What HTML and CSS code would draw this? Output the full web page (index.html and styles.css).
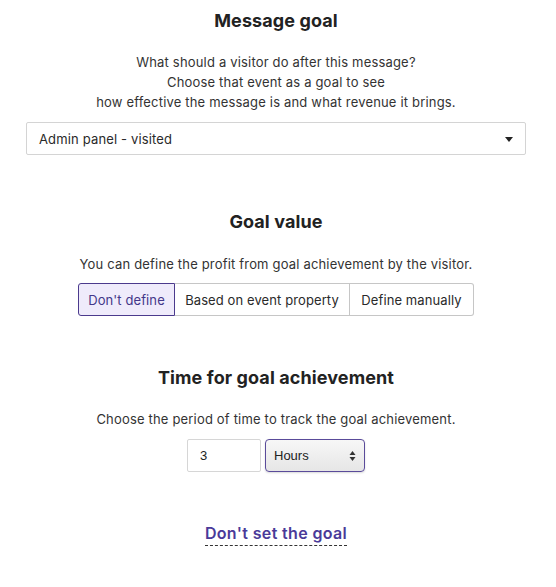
FILE: index.html
```html
<!DOCTYPE html>
<html>
<head>
<meta charset="utf-8">
<link rel="stylesheet" href="styles.css">
</head>
<body>
<div class="page">
  <section class="block block-first">
    <h2 class="title">Message goal</h2>
    <p class="desc">What should a visitor do after this message?<br>Choose that event as a goal to see<br>how effective the message is and what revenue it brings.</p>
    <div class="select-wide">
      <span>Admin panel - visited</span>
      <svg class="caret" width="8" height="5" viewBox="0 0 8 5"><path d="M0 0H8L4 5Z" fill="#222"/></svg>
    </div>
  </section>

  <section class="block block-second">
    <h2 class="title">Goal value</h2>
    <p class="desc">You can define the profit from goal achievement by the visitor.</p>
    <div class="btn-group">
      <button class="seg active">Don't define</button>
      <button class="seg">Based on event property</button>
      <button class="seg">Define manually</button>
    </div>
  </section>

  <section class="block block-third">
    <h2 class="title">Time for goal achievement</h2>
    <p class="desc">Choose the period of time to track the goal achievement.</p>
    <div class="time-row">
      <div class="num-input">3</div>
      <div class="unit-select">
        <span>Hours</span>
        <svg width="7" height="12" viewBox="0 0 7 12"><path d="M3.5 1L6.5 5H0.5Z M3.5 11L6.5 7H0.5Z" fill="#333"/></svg>
      </div>
    </div>
  </section>

  <div class="link-row">
    <a class="dashed-link" href="#">Don't set the goal</a>
  </div>
</div>
</body>
</html>
```

FILE: styles.css
```css
* { box-sizing: border-box; }
html, body { margin: 0; padding: 0; background: #fff; }
body {
  font-family: Inter, "Noto Sans", "Liberation Sans", sans-serif;
  color: #2a2a2a;
  width: 556px;
}
.page {
  padding: 9px 30px 0 26px;
  display: flex;
  flex-direction: column;
  align-items: stretch;
}
.block {
  display: flex;
  flex-direction: column;
  align-items: center;
}
.block-second { margin-top: 55px; }
.block-third { margin-top: 50px; }
.title {
  margin: 0;
  font-size: 18px;
  line-height: 24px;
  font-weight: 700;
  color: #222;
  letter-spacing: 0.1px;
}
.desc {
  margin: 19px 0 0;
  font-size: 13px;
  line-height: 20px;
  text-align: center;
  color: #333;
  letter-spacing: 0.18px;
  white-space: nowrap;
}
.block-second .desc { margin-top: 20px; }
.select-wide {
  margin-top: 10px;
  width: 500px;
  height: 33px;
  border: 1px solid #d4d4d4;
  border-radius: 2px;
  display: flex;
  align-items: center;
  justify-content: space-between;
  padding: 0 12px 0 12px;
  font-size: 13px;
  letter-spacing: 0.15px;
  color: #2a2a2a;
}
.caret { margin-top: 1px; }
.btn-group {
  margin-top: 9px;
  display: flex;
  height: 33px;
}
.seg {
  font-family: inherit;
  font-size: 13px;
  letter-spacing: 0.1px;
  color: #2a2a2a;
  background: #fff;
  border: 1px solid #c6c6c6;
  border-left: none;
  padding: 0;
  height: 33px;
  margin: 0;
  white-space: nowrap;
  text-align: center;
}
.seg:first-child { border-left: 1px solid #c6c6c6; border-radius: 3px 0 0 3px; }
.seg:last-child { border-radius: 0 3px 3px 0; }
.seg.active {
  background: #efebfb;
  border: 1px solid #4b3a8d;
  color: #433789;
  width: 97px;
}
.seg:nth-child(2) { width: 175px; }
.seg:nth-child(3) { width: 124px; }
.time-row {
  margin-top: 10px;
  display: flex;
  gap: 4px;
}
.num-input {
  width: 74px;
  height: 33px;
  border: 1px solid #d6d6d6;
  border-radius: 2px;
  padding-left: 12px;
  display: flex;
  align-items: center;
  font-family: "Liberation Sans", Arial, sans-serif;
  font-size: 13px;
  color: #222;
}
.unit-select {
  width: 100px;
  height: 33px;
  border: 1px solid #5a4b9a;
  border-radius: 4px;
  background: linear-gradient(#f7f7f7, #e6e6e6);
  display: flex;
  align-items: center;
  justify-content: space-between;
  padding: 0 8px 0 8px;
  font-family: "Liberation Sans", Arial, sans-serif;
  font-size: 13px;
  color: #222;
  box-shadow: 0 1px 2px rgba(0,0,0,0.15);
}
.link-row {
  margin-top: 51px;
  display: flex;
  justify-content: center;
}
.dashed-link {
  font-size: 16px;
  line-height: 20px;
  font-weight: 600;
  letter-spacing: 0.35px;
  color: #4a3a99;
  text-decoration: none;
  border-bottom: 1px dashed #333;
  padding-bottom: 2px;
}
```
